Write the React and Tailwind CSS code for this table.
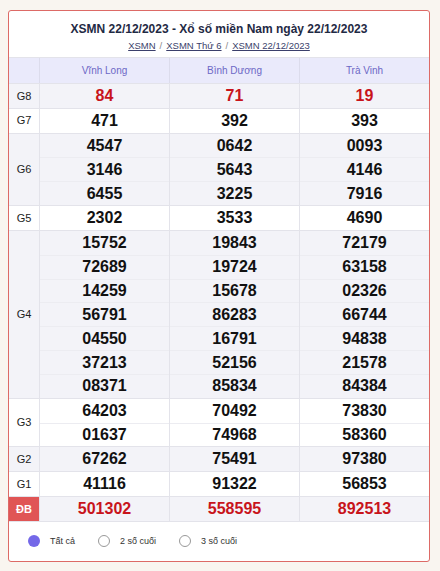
const provinces = ["Vĩnh Long", "Bình Dương", "Trà Vinh"];

const prizes = [
  { label: "G8", red: true, rows: [["84", "71", "19"]] },
  { label: "G7", rows: [["471", "392", "393"]] },
  {
    label: "G6",
    rows: [
      ["4547", "0642", "0093"],
      ["3146", "5643", "4146"],
      ["6455", "3225", "7916"],
    ],
  },
  { label: "G5", rows: [["2302", "3533", "4690"]] },
  {
    label: "G4",
    rows: [
      ["15752", "19843", "72179"],
      ["72689", "19724", "63158"],
      ["14259", "15678", "02326"],
      ["56791", "86283", "66744"],
      ["04550", "16791", "94838"],
      ["37213", "52156", "21578"],
      ["08371", "85834", "84384"],
    ],
  },
  {
    label: "G3",
    rows: [
      ["64203", "70492", "73830"],
      ["01637", "74968", "58360"],
    ],
  },
  { label: "G2", rows: [["67262", "75491", "97380"]] },
  { label: "G1", rows: [["41116", "91322", "56853"]] },
  { label: "ĐB", red: true, special: true, rows: [["501302", "558595", "892513"]] },
];

function PrizeGroup({ prize, index }) {
  const shaded = index % 2 === 0;
  return (
    <div
      className={`grid grid-cols-[30px_130px_130px_1fr] border-t border-[#e3e3ea] ${
        shaded ? "bg-[#f3f3f8]" : "bg-white"
      }`}
    >
      <div
        className={`flex items-center justify-center text-[11px] ${
          prize.special ? "bg-[#e05555] text-white font-bold" : "text-[#222]"
        }`}
      >
        {prize.label}
      </div>
      {[0, 1, 2].map((col) => (
        <div key={col} className="flex flex-col border-l border-[#e3e3ea]">
          {prize.rows.map((row, i) => (
            <div
              key={i}
              className={`h-[23.83px] flex items-center justify-center font-bold text-[16px] leading-none ${
                i > 0 ? "border-t border-[#ececf1]" : ""
              } ${prize.red ? "text-[#c8141b]" : "text-[#111]"}`}
            >
              {row[col]}
            </div>
          ))}
        </div>
      ))}
    </div>
  );
}

function Radio({ checked, label }) {
  return (
    <label className="flex items-center gap-[10px] text-[9px] text-[#333]">
      {checked ? (
        <span className="w-[12px] h-[12px] rounded-full bg-[#7468e8]" />
      ) : (
        <span className="w-[12px] h-[12px] rounded-full border border-[#999] bg-white" />
      )}
      {label}
    </label>
  );
}

export default function App() {
  return (
    <main
      className="w-[440px] h-[571px] bg-[#f9f5f0] pt-[10px] pl-[8px] pr-[10px]"
      style={{ fontFamily: '"Liberation Sans", Arial, sans-serif' }}
    >
      <div className="bg-white border border-[#dd6a66] rounded-[3px] overflow-hidden">
        <div className="flex flex-col items-center pt-[10px] pb-[4px]">
          <h1 className="text-[12px] font-bold text-[#1f2a44] leading-[16px]">
            XSMN 22/12/2023 - Xổ số miền Nam ngày 22/12/2023
          </h1>
          <div className="mt-[2px] text-[9.5px] text-[#3b3f6b] leading-[14px] flex gap-[4px]">
            <a className="underline">XSMN </a>
            <span className="text-[#888]">/</span>
            <a className="underline">XSMN Thứ 6 </a>
            <span className="text-[#888]">/</span>
            <a className="underline">XSMN 22/12/2023</a>
          </div>
        </div>
        <div className="grid grid-cols-[30px_130px_130px_1fr] bg-[#eaeafb] h-[26px] border-t border-[#e3e3ea]">
          <div />
          {provinces.map((p) => (
            <div
              key={p}
              className="flex items-center justify-center border-l border-[#dcdcec] text-[10px] text-[#6d68c6]"
            >
              {p}
            </div>
          ))}
        </div>
        {prizes.map((prize, i) => (
          <PrizeGroup key={prize.label} prize={prize} index={i} />
        ))}
        <div className="flex items-center gap-[23px] h-[40px] pl-[19px] border-t border-[#e3e3ea]">
          <Radio checked label="Tất cả" />
          <Radio label="2 số cuối" />
          <Radio label="3 số cuối" />
        </div>
      </div>
    </main>
  );
}
